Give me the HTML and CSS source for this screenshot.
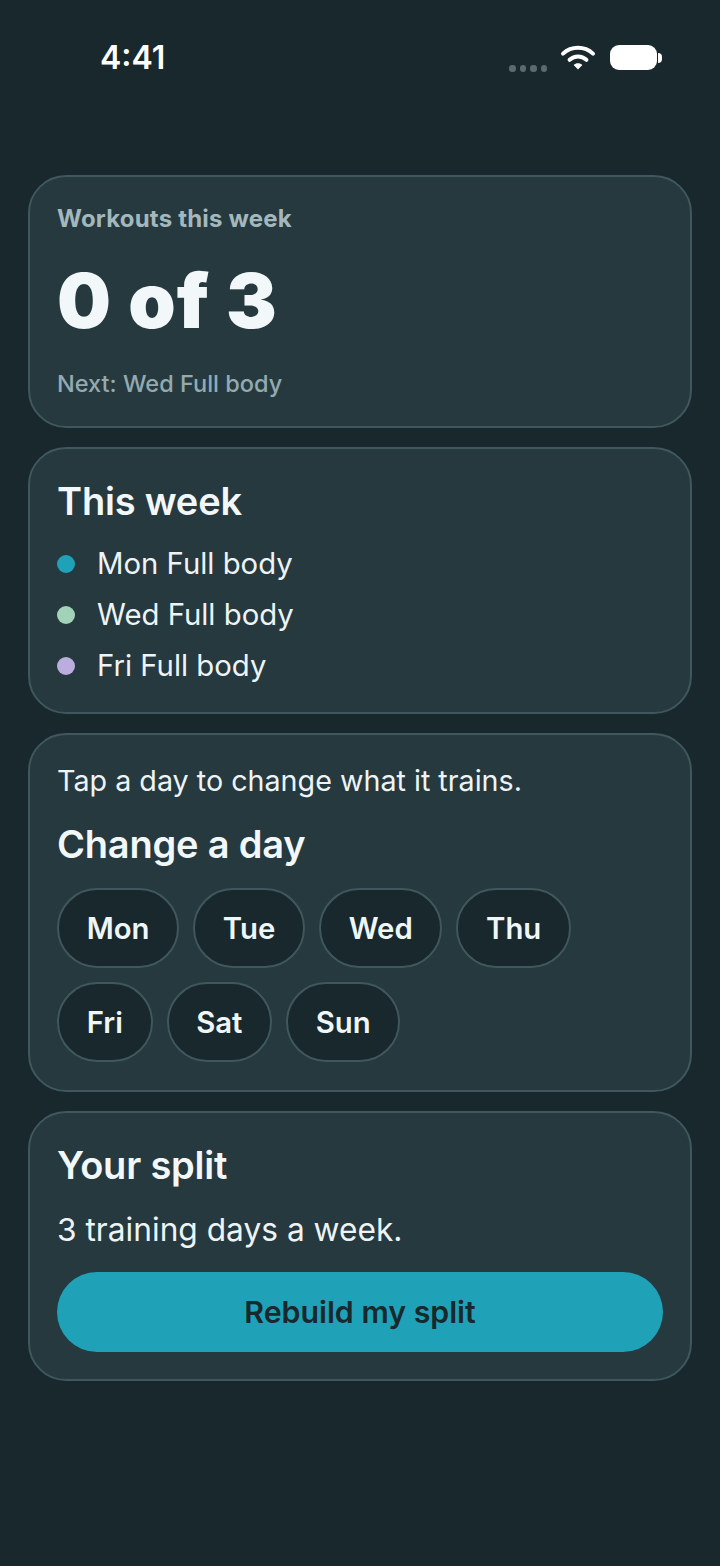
FILE: index.html
```html
<!DOCTYPE html>
<html lang="en">
<head>
<meta charset="utf-8">
<title>Workouts</title>
<link rel="stylesheet" href="styles.css">
</head>
<body>
<header class="status">
  <span class="time">4:41</span>
  <div class="status-icons">
    <div class="signal"><i></i><i></i><i></i><i></i></div>
    <svg class="wifi" width="36" height="26" viewBox="0 0 36 26" fill="none" stroke="#fff" stroke-linecap="round">
      <path d="M3 9.6C11.5 1.8 24.5 1.8 33 9.6" stroke-width="4"/>
      <path d="M9.6 15.8C14.4 11.4 21.6 11.4 26.4 15.8" stroke-width="4"/>
      <path d="M18 25.5L13.6 20.9C16 18.6 20 18.6 22.4 20.9Z" fill="#fff" stroke="none"/>
    </svg>
    <div class="battery"><div class="battery-body"></div><div class="battery-cap"></div></div>
  </div>
</header>
<main class="stack">
  <section class="card summary">
    <div class="eyebrow">Workouts this week</div>
    <div class="big">0 of 3</div>
    <div class="next">Next: Wed Full body</div>
  </section>
  <section class="card week">
    <h2>This week</h2>
    <ul class="list">
      <li><span class="dot teal"></span>Mon Full body</li>
      <li><span class="dot green"></span>Wed Full body</li>
      <li><span class="dot purple"></span>Fri Full body</li>
    </ul>
  </section>
  <section class="card change">
    <p class="hint">Tap a day to change what it trains.</p>
    <h2>Change a day</h2>
    <div class="days">
      <span class="day">Mon</span><span class="day">Tue</span><span class="day">Wed</span><span class="day">Thu</span>
      <span class="day">Fri</span><span class="day">Sat</span><span class="day">Sun</span>
    </div>
  </section>
  <section class="card split">
    <h2>Your split</h2>
    <p class="desc">3 training days a week.</p>
    <button class="cta">Rebuild my split</button>
  </section>
</main>
</body>
</html>
```
FILE: styles.css
```css
* { box-sizing: border-box; }
html, body { margin: 0; padding: 0; }
body {
  width: 720px;
  height: 1566px;
  background: #18282d;
  color: #f2f7f9;
  font-family: Inter, "Liberation Sans", sans-serif;
  overflow: hidden;
}
.status {
  height: 175px;
  padding: 38px 58px 0 100px;
  display: flex;
  justify-content: space-between;
  align-items: flex-start;
}
.time { font-size: 32px; line-height: 39px; font-weight: 600; color: #fff; }
.status-icons { display: flex; align-items: flex-start; padding-top: 6px; }
.signal { display: flex; gap: 4px; margin-top: 21px; margin-right: 13px; }
.signal i { width: 6.5px; height: 6.5px; border-radius: 50%; background: #5b6a6e; }
.wifi { margin-right: 14px; }
.battery { display: flex; align-items: center; margin-top: 1px; }
.battery-body { width: 47px; height: 25px; border-radius: 9px; background: #fff; }
.battery-cap { width: 4px; height: 10px; margin-left: 1px; border-radius: 0 4px 4px 0; background: #fff; }
.stack {
  margin: 0 28px;
  display: flex;
  flex-direction: column;
  gap: 19px;
}
.card {
  background: #25393f;
  border: 2px solid #3f575d;
  border-radius: 38px;
  padding: 28px 27px;
}
h2 {
  margin: 0;
  font-size: 38px;
  line-height: 44px;
  font-weight: 600;
  letter-spacing: -0.2px;
}
.summary { height: 253px; padding-top: 28px; }
.eyebrow { font-size: 24px; line-height: 28px; font-weight: 700; letter-spacing: 0.2px; color: #a3b8bd; }
.big { margin-top: 22px; font-size: 76px; line-height: 90px; font-weight: 900; letter-spacing: 1px; color: #f2f7f9; }
.next { margin-top: 25px; font-size: 23.5px; line-height: 27px; font-weight: 500; color: #94aaaf; }
.week { height: 267px; padding-top: 30px; }
.list { list-style: none; margin: 15px 0 0; padding: 0; }
.list li { display: flex; align-items: center; gap: 22px; font-size: 29.3px; line-height: 51px; color: #eef4f6; }
.dot { width: 18px; height: 18px; border-radius: 50%; }
.teal { background: #1fa2b8; }
.green { background: #a2d2b8; }
.purple { background: #bbaede; }
.change { height: 359px; padding-top: 28px; }
.hint { margin: 0; font-size: 28.7px; line-height: 36px; color: #eef4f6; }
.change h2 { margin-top: 23px; }
.days { display: flex; flex-wrap: wrap; gap: 14px; margin-top: 22px; max-width: 560px; }
.day {
  height: 80px;
  padding: 0 27.7px;
  display: flex;
  align-items: center;
  background: #18282d;
  border: 2px solid #3f575d;
  border-radius: 40px;
  font-size: 29.3px;
  font-weight: 600;
  color: #eef6f8;
}
.split { height: 270px; padding-top: 30px; }
.desc { margin: 23px 0 0; font-size: 31.7px; line-height: 40px; color: #eef4f6; }
.cta {
  display: block;
  width: 100%;
  height: 80px;
  margin-top: 22px;
  border: 0;
  border-radius: 40px;
  background: #1fa2b8;
  color: #18282d;
  font-family: inherit;
  font-size: 30.3px;
  font-weight: 600;
}
```
